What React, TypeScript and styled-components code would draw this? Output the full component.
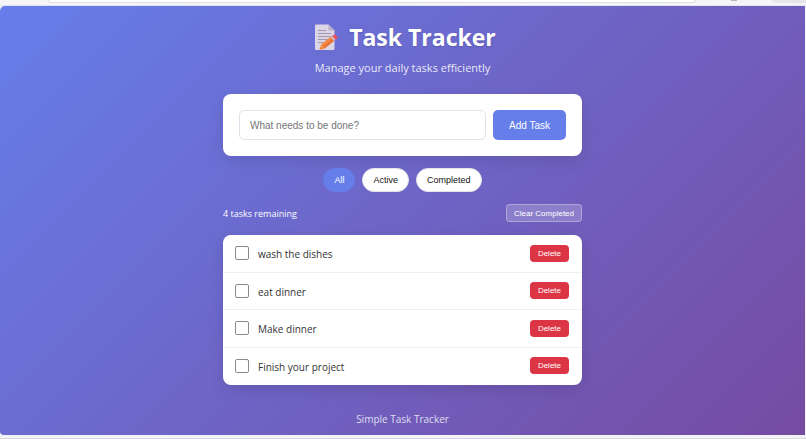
import React, { useState } from 'react';
import styled, { createGlobalStyle } from 'styled-components';

const GlobalStyle = createGlobalStyle`
  * { box-sizing: border-box; }
  html, body, #root { height: 100%; }
  body {
    margin: 0;
    background: #f3f4f7;
    font-family: "Open Sans", "Noto Sans", sans-serif;
  }
  button, input { font-family: "Liberation Sans", Arial, sans-serif; }
`;

const Frame = styled.div`
  display: flex;
  flex-direction: column;
  min-height: 100%;
  border-bottom: 2px solid #d9d9dc;
`;

const BrowserEdge = styled.div`
  display: flex;
  align-items: flex-start;
  height: 6px;
  padding: 0 0 0 48px;
  background: #f5f5f7;
  border-bottom: 1px solid #e2e4ee;
`;

const AddressBar = styled.div`
  flex: 0 1 648px;
  height: 3px;
  background: #fff;
  border: 1px solid #dedfe2;
  border-top: 0;
  border-radius: 0 0 6px 6px;
`;

const ToolbarDot = styled.div`
  width: 6px;
  height: 1px;
  margin-left: 35px;
  background: #b8b8bc;
`;

const ProfileChip = styled.div`
  width: 34px;
  height: 3px;
  margin-left: auto;
  background: #e6e6e8;
  border-radius: 0 0 0 6px;
`;

const Page = styled.div`
  flex: 1;
  margin: 0 1px 3px 0;
  padding: 13px 16px 0;
  border-radius: 5px 0 0 4px;
  background: linear-gradient(135deg, #667eea 0%, #764ba2 100%);
`;

const Container = styled.main`
  display: flex;
  flex-direction: column;
  max-width: 359px;
  margin: 0 auto;
`;

const Header = styled.header`
  display: flex;
  flex-direction: column;
  align-items: center;
  margin-bottom: 18px;
  color: #fff;
`;

const Title = styled.h1`
  display: flex;
  align-items: center;
  gap: 11px;
  margin: 0;
  font-size: 23px;
  line-height: 36px;
  font-weight: 700;
  text-shadow: 0 1px 2px rgba(0, 0, 0, 0.15);
`;

const Subtitle = styled.p`
  margin: 4px 0 0;
  font-size: 11px;
  line-height: 17px;
  color: rgba(255, 255, 255, 0.88);
`;

const AddForm = styled.form`
  display: flex;
  gap: 7px;
  padding: 16px;
  background: #fff;
  border-radius: 8px;
  box-shadow: 0 5px 16px rgba(0, 0, 0, 0.1);
`;

const TaskInput = styled.input`
  flex: 1;
  min-width: 0;
  height: 30px;
  padding: 0 10px;
  border: 1px solid #dce3ea;
  border-radius: 5px;
  outline: none;
  background: #fff;
  color: #333;
  font-size: 10px;
  &::placeholder { color: #757575; }
`;

const AddButton = styled.button`
  height: 30px;
  padding: 0 16px;
  border: 0;
  border-radius: 5px;
  background: #667eea;
  color: #fff;
  font-size: 10px;
`;

const Filters = styled.div`
  display: flex;
  justify-content: center;
  gap: 7px;
  margin: 12px 0;
`;

const FilterButton = styled.button<{ $active: boolean }>`
  height: 24px;
  padding: 0 10px;
  border: 1px solid ${(p) => (p.$active ? '#667eea' : '#e1e5e9')};
  border-radius: 12px;
  background: ${(p) => (p.$active ? '#667eea' : '#fff')};
  color: ${(p) => (p.$active ? '#fff' : '#111')};
  font-size: 9px;
`;

const Stats = styled.div`
  display: flex;
  align-items: center;
  justify-content: space-between;
  margin-bottom: 13px;
  color: #fff;
  font-size: 9px;
  line-height: 12px;
`;

const Remaining = styled.span`
  padding-top: 2px;
`;

const ClearButton = styled.button`
  height: 18px;
  padding: 0 7px;
  border: 1px solid rgba(255, 255, 255, 0.3);
  border-radius: 4px;
  background: rgba(255, 255, 255, 0.2);
  color: #fff;
  font-size: 8px;
`;

const TaskList = styled.ul`
  display: grid;
  grid-auto-rows: 1fr;
  min-height: 150px;
  margin: 0;
  padding: 0;
  list-style: none;
  background: #fff;
  border-radius: 8px;
  box-shadow: 0 5px 16px rgba(0, 0, 0, 0.1);
`;

const TaskRow = styled.li`
  display: flex;
  align-items: center;
  gap: 9px;
  padding: 0 13px 0 12px;
  border-bottom: 1px solid #f0f0f0;
  &:last-child { border-bottom-color: transparent; }
`;

const Checkbox = styled.input`
  appearance: none;
  width: 14px;
  height: 14px;
  margin: 0;
  border: 1px solid #8a8a8a;
  border-radius: 2px;
  background: #fff;
  &:checked { background: #667eea; border-color: #667eea; }
`;

const TaskLabel = styled.label`
  flex: 1;
  padding-top: 2px;
  color: #333;
  font-size: 10px;
  line-height: 16px;
`;

const DeleteButton = styled.button`
  height: 17px;
  padding: 0 8px;
  border: 0;
  border-radius: 4px;
  background: #dc3545;
  color: #fff;
  font-size: 8px;
`;

const Footer = styled.footer`
  padding: 26px 0 8px;
  text-align: center;
  color: rgba(255, 255, 255, 0.8);
  font-size: 10px;
  line-height: 16px;
`;

function MemoIcon() {
  return (
    <svg width="29" height="27" viewBox="-5 0 29 27" aria-hidden="true">
      <path d="M1 1.5Q1 .5 2 .5H14.500L20.500 6.500V25Q20.500 26 19.500 26H2Q1 26 1 25Z" fill="#dbd5e5" />
      <path d="M14.500 .5L20.500 6.500H15.500Q14.500 6.500 14.500 5.500Z" fill="#b8aec8" />
      <path d="M4 6.500H12M4 9.500H17M4 12.500H17M4 15.500H13M4 18.500H9" stroke="#a098b0" strokeWidth="1" />
      <path d="M5.500 25.500L7.500 20L10.500 23.500Z" fill="#e8b078" />
      <path d="M7.500 20L17 12.500L20.500 16.500L10.500 24.500Q7 26 5.500 25.500Z" fill="#f58a45" />
      <path d="M9.500 22L18.800 14.500L20.500 16.500L10.500 24.500Z" fill="#e8743a" />
      <path d="M16.500 13L18 11.800L21.500 15.700L20 17Z" fill="#c9bdd2" />
      <path d="M18 11.800L19.500 10.700Q21 10 22.500 11.700Q24 13.500 23 14.600L21.500 15.700Z" fill="#ef5362" />
    </svg>
  );
}

const filters = ['All', 'Active', 'Completed'];
const initialTasks = ['wash the dishes', 'eat dinner', 'Make dinner', 'Finish your project'].map(
  (text, id) => ({ id, text, done: false }),
);

export default function App() {
  const [tasks, setTasks] = useState(initialTasks);
  const [filter, setFilter] = useState('All');
  const [draft, setDraft] = useState('');

  const addTask = (e: React.FormEvent) => {
    e.preventDefault();
    const text = draft.trim();
    if (!text) return;
    setTasks([...tasks, { id: Date.now(), text, done: false }]);
    setDraft('');
  };

  const visible = tasks.filter((t) => filter === 'All' || t.done === (filter === 'Completed'));

  return (
    <>
      <GlobalStyle />
      <Frame>
        <BrowserEdge>
          <AddressBar />
          <ToolbarDot />
          <ProfileChip />
        </BrowserEdge>
        <Page>
          <Container>
            <Header>
              <Title>
                <MemoIcon />
                Task Tracker
              </Title>
              <Subtitle>Manage your daily tasks efficiently</Subtitle>
            </Header>
            <AddForm onSubmit={addTask}>
              <TaskInput
                aria-label="New task"
                placeholder="What needs to be done?"
                value={draft}
                onChange={(e) => setDraft(e.target.value)}
              />
              <AddButton type="submit">Add Task</AddButton>
            </AddForm>
            <Filters>
              {filters.map((name) => (
                <FilterButton
                  key={name}
                  type="button"
                  $active={name === filter}
                  aria-pressed={name === filter}
                  onClick={() => setFilter(name)}
                >
                  {name}
                </FilterButton>
              ))}
            </Filters>
            <Stats>
              <Remaining>{tasks.filter((t) => !t.done).length} tasks remaining</Remaining>
              <ClearButton type="button" onClick={() => setTasks(tasks.filter((t) => !t.done))}>
                Clear Completed
              </ClearButton>
            </Stats>
            <TaskList>
              {visible.map((task) => (
                <TaskRow key={task.id}>
                  <Checkbox
                    type="checkbox"
                    id={`task-${task.id}`}
                    checked={task.done}
                    onChange={() =>
                      setTasks(tasks.map((t) => (t.id === task.id ? { ...t, done: !t.done } : t)))
                    }
                  />
                  <TaskLabel htmlFor={`task-${task.id}`}>{task.text}</TaskLabel>
                  <DeleteButton
                    type="button"
                    onClick={() => setTasks(tasks.filter((t) => t.id !== task.id))}
                  >
                    Delete
                  </DeleteButton>
                </TaskRow>
              ))}
            </TaskList>
            <Footer>Simple Task Tracker</Footer>
          </Container>
        </Page>
      </Frame>
    </>
  );
}
